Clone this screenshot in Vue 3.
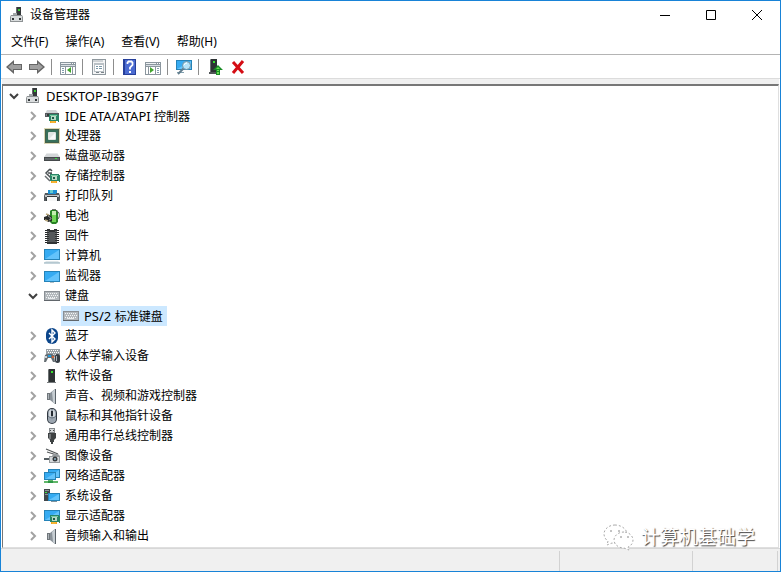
<script setup>
import { ref } from 'vue'

const monitor = (x, y, w, h) =>
  `<rect x="${x}" y="${y}" width="${w}" height="${h}" fill="#2583b8"/><rect x="${x + 1}" y="${y + 1}" width="${w - 2}" height="${h - 2}" fill="#36abf2"/><path d="M${x + 1} ${y + h - 1}L${x + w - 1} ${y + 1}V${y + h - 1}z" fill="#63c3fb"/>`
const card = (x, y) =>
  `<path d="M${x} ${y}h9v1h1v7h-1v-1h-9z" fill="#2a8567"/><path d="M${x + 1} ${y + 1}h7v1h-7z" fill="#7acba2"/><rect x="${x + 2}" y="${y + 2}" width="5" height="4" fill="#b9d9c6"/><rect x="${x + 3}" y="${y + 3}" width="2" height="2" fill="#1c5c47"/><path d="M${x + 1} ${y + 7}h6v2h-6z" fill="#f2a51d"/><path d="M${x + 3} ${y + 7}v2M${x + 5} ${y + 7}v2" stroke="#ffd76a" stroke-width=".6"/>`
const keyboard = (y) =>
  `<rect x="0" y="${y}" width="16" height="10" fill="#8a8f94"/><rect x="1" y="${y + 1}" width="14" height="8" fill="#b3b8bc"/><path d="M2 ${y + 2.5}h12M2 ${y + 6.5}h12" stroke="#f3f5f6" stroke-dasharray="1 1"/><path d="M3 ${y + 4.5}h11" stroke="#f3f5f6" stroke-dasharray="1 1"/><path d="M4 ${y + 7.5}h7" stroke="#e7eaec"/><path d="M0 ${y + 9.5}h16" stroke="#61666b"/>`
const speaker =
  '<path d="M3 5h3v7H3z" fill="#70767b"/><path d="M4 6h1v5H4z" fill="#adb4b9"/><path d="M6 5l5-4v15l-5-4z" fill="#8a9299"/><path d="M8 4l3-3v15l-2-2z" fill="#c6cdd2"/><path d="M11.5 1v15" stroke="#596168"/>'
const chassis =
  '<path d="M7 0h5v9H7z" fill="#34383a"/><path d="M7 0h1v9H7z" fill="#65696b"/><path d="M9 2h2v2H9z" fill="#39cf31"/><path d="M2 8h11l1 2v5H1v-5z" fill="#8e9294"/><path d="M2 9h11v5H2z" fill="#d9dcdd"/><path d="M4 6h4v2H4z" fill="#a3a7a9"/><path d="M3 11h2v2H3zM10 11h2v2h-2z" fill="#303436"/>'
const tower =
  '<path d="M4 2l1-1h6v13H4z" fill="#2d3234"/><path d="M4 2h1v12H4z" fill="#6c7172"/><path d="M7 3h2v2H7z" fill="#37e12e"/><path d="M3 14h9v1H3z" fill="#777b7d"/>'

const icons = {
  device: chassis,
  ide: '<path d="M3 2h9l3 4H1z" fill="#cfd3d5"/><path d="M1 5h14v4H1z" fill="#53585b"/><path d="M2 6h11v2H2z" fill="#7e8487"/><path d="M3 6h2v2H3z" fill="#36393b"/>' + card(5, 6),
  cpu: '<rect x="1" y="1" width="14" height="14" fill="#45604b"/><rect x=".5" y=".5" width="15" height="15" fill="none" stroke="#b5af67" stroke-dasharray="1 1"/><rect x="2" y="2" width="12" height="12" fill="#37705a"/><rect x="4" y="4" width="8" height="8" rx="1" fill="#dfe4e1"/><path d="M5 11L11 5v6z" fill="#f8f9f8"/>',
  disk: '<path d="M3 5h10l3 4H0z" fill="#d3d6d8"/><path d="M3 5h10v1H3z" fill="#e7e9ea"/><path d="M0 9h16v4H0z" fill="#45494b"/><path d="M1 10h14v2H1z" fill="#61676a"/><path d="M11 10h2v1h-2z" fill="#37df3c"/>',
  storage: '<path d="M6 1L2 5l4 4 2-2-2-2M6 1l2 2M4 5h4" fill="none" stroke="#4b5154" stroke-width="1.5"/><path d="M1 8l5 5" fill="none" stroke="#686d70" stroke-width="1.5"/>' + card(6, 6),
  printer: '<path d="M4 2h9v5H4z" fill="#1d8fd1"/><path d="M6 2h3v3H6z" fill="#68cdd0"/><path d="M1 5h3v1h8V5h3l1 3v5H0V8z" fill="#53595d"/><path d="M1 7h14v2H1z" fill="#c0c5c8"/><path d="M3 8h10l1 5H2z" fill="#33383b"/><path d="M3 9h10v4H3z" fill="#f5f6f6"/>',
  battery: '<path d="M8 1h4v2H8z" fill="#777"/><path d="M6 3l1-1h6l1 2v10l-2 2H8l-2-2z" fill="#288325"/><path d="M8 3h4v11H8z" fill="#72d557"/><path d="M8 3h4v4H8z" fill="#c5edb0"/><path d="M12 3c4 0 4 6 2 8" fill="none" stroke="#555"/><path d="M0 9l3-1V6h1l4 3v4l-4 1-2-2H0z" fill="#292b2b"/><path d="M2 6l3 1M1 12l3 1" stroke="#b9a87d" stroke-width="1.4"/><path d="M4 8l3 2v1l-2 1" stroke="#909595" fill="none"/>',
  firmware: '<path d="M3 1h3v1h4V1h3v15H3z" fill="#303334"/><path d="M5 4h6v10H5z" fill="#54585a"/><path d="M2 2v13M14 2v13" stroke="#252829" stroke-width="2" stroke-dasharray="1 1"/><path d="M4 3v12M12 3v12" stroke="#b9bdbe" stroke-width=".7" stroke-dasharray="1 1"/>',
  computer: monitor(0, 1, 16, 11) + '<path d="M2 13h12l2 2H0z" fill="#dfe6e9"/><path d="M0 15h16" stroke="#8baab7"/>',
  monitor: monitor(0, 3, 16, 11) + '<path d="M6 14h4v1H6z" fill="#b3bec4"/>',
  keyboard: keyboard(3),
  bluetooth: '<rect x="2" y="0" width="12" height="16" rx="6" fill="#0c468b"/><path d="M5 5l6 6-3 3V2l3 3-6 6" fill="none" stroke="#fff" stroke-width="1.4"/>',
  hid: '<path d="M2 1h14v8H2z" fill="#9aa1a6"/><path d="M3 2.5h12M3 6.5h12" stroke="#fff" stroke-dasharray="1 1"/><path d="M4 4.5h11" stroke="#fff" stroke-dasharray="1 1"/><path d="M0 14l1-7 2-1h5l2 1 1 7H9l-2-4H4l-2 4z" fill="#666e73"/><path d="M1 8h2v2H1z" fill="#cbd3d8"/><path d="M4 7h3v2H4z" fill="#249ce0"/><path d="M8 8h2v2H8z" fill="#ca643d"/><rect x="11" y="6" width="5" height="9" rx="2.5" fill="#343c44"/><path d="M12 8h1v5h-1z" fill="#aab3bb"/>',
  software: tower,
  sound: speaker,
  mouse: '<rect x="3" y="0" width="10" height="16" rx="5" fill="#303841"/><rect x="4" y="1" width="8" height="14" rx="4" fill="#9ca6b0"/><path d="M5 3l2-2v9l-2-1zM9 1l2 3v5H9z" fill="#d1d7dc"/><path d="M8 3v5" stroke="#242a31" stroke-width="2"/><path d="M4 8q4 4 8 0" fill="none" stroke="#68737e"/>',
  usb: '<path d="M5 0h6v5H5z" fill="#858a8d"/><path d="M6 1h4v3H6z" fill="#d4d7d9"/><path d="M6 2h1v1H6zM9 2h1v1H9z" fill="#43484a"/><path d="M4 5h8v5l-2 2v2H9v2H7v-2H6v-2l-2-2z" fill="#3e4243"/><path d="M5 6h2v5H5z" fill="#727678"/>',
  imaging: '<path d="M2 1l12 5M3 4l10 3" stroke="#55595b" stroke-width="1.2"/><path d="M5 8h3l1-2h5l2 2v7H5z" fill="#969b9e"/><path d="M6 9h9v5H6z" fill="#d6d9db"/><circle cx="11" cy="11" r="2.5" fill="#34393c"/><circle cx="11" cy="11" r="1" fill="#91b3c4"/><path d="M0 10h5v2H0z" fill="#565d61"/>',
  network: monitor(4, 1, 12, 9) + monitor(0, 4, 12, 8) + '<path d="M5 12h3v1H5z" fill="#777"/><path d="M0 13h4v-1h5v1h5v2H0z" fill="#61b76a"/><path d="M4 13h5v2H4z" fill="#2c9745"/>',
  system: '<path d="M0 1h6v12H0z" fill="#41474b"/><path d="M1 2h4v1H1zM1 6h3v1H1z" fill="#8b9397"/><path d="M1 4h2v1H1z" fill="#40df42"/>' + monitor(4, 5, 12, 8) + '<path d="M7 13h6v1H7z" fill="#81939d"/>',
  display: monitor(0, 2, 16, 11) + card(6, 7),
  back: '<path d="M0 8l8-7v4h8v6H8v4z" fill="#666"/><path d="M2 8l5-4v2h8v4H7v2z" fill="#a0a0a0"/>',
  forward: '<path d="M16 8L8 1v4H0v6h8v4z" fill="#666"/><path d="M14 8L9 4v2H1v4h8v2z" fill="#a0a0a0"/>',
  tree: '<path d="M0 3h16v13H0z" fill="#8b969e"/><path d="M1 4h10v1H1z" fill="#eef1f3"/><path d="M12 4h1v1h-1zM14 4h1v1h-1z" fill="#fff"/><path d="M1 6h14v1H1z" fill="#d5dce1"/><path d="M1 8h4v7H1zM6 8h6v7H6zM13 8h2v7h-2z" fill="#fff"/><path d="M2 9.5h2M2 11.5h2M2 13.5h2" stroke="#829dad"/><path d="M11 8v6l-4-3z" fill="#41a52d"/>',
  properties: '<path d="M1 0h14v16H1z" fill="#8e979d"/><path d="M2 1h12v14H2z" fill="#f4f5f6"/><path d="M2 2h10" stroke="#a9b1b6"/><path d="M3 4h10v9H3z" fill="#bac1c6"/><path d="M4 6h8v6H4z" fill="#fff"/><path d="M5 7.5h2M8 7.5h3M5 9.5h2M8 9.5h3" stroke="#7b98a8"/><path d="M5 13.5h3M10 13.5h3" stroke="#7a8389"/>',
  help: '<path d="M1 0h13v16H1z" fill="#263f9a"/><path d="M3 1h10v14H3z" fill="#4b6bd1"/><path d="M5.500 5V3.500l1-1h3l1 1V6L8 8.500v2" fill="none" stroke="#fff" stroke-width="1.8"/><path d="M7 12h2v2H7z" fill="#fff"/>',
  action: '<path d="M0 3h16v13H0z" fill="#8b969e"/><path d="M1 4h10v1H1z" fill="#eef1f3"/><path d="M12 4h1v1h-1zM14 4h1v1h-1z" fill="#fff"/><path d="M1 6h14v1H1z" fill="#d5dce1"/><path d="M1 8h2v7H1zM4 8h6v7H4zM11 8h4v7h-4z" fill="#fff"/><path d="M12 9.5h2M12 11.5h2M12 13.5h2" stroke="#829dad"/><path d="M5 8v6l4-3z" fill="#41a52d"/>',
  scan: monitor(0, 1, 16, 10) + '<path d="M1 13h7v1H1z" fill="#83a2b1"/><path d="M8 9l-6 6" stroke="#627e8d" stroke-width="2"/><circle cx="10.5" cy="6.5" r="4" fill="#b5e4fa" stroke="#6f91a2"/><path d="M8 6q1-2 3-2" stroke="#fff" fill="none"/>',
  update: '<path d="M3 1l1-1h6v13H3z" fill="#2d3234"/><path d="M3 1h1v12H3z" fill="#6c7172"/><path d="M6 2h2v2H6z" fill="#37e12e"/><path d="M2 13h7v2H2z" fill="#505557"/><path d="M11 6l5 5h-3v5H9v-5H6z" fill="#178b24"/><path d="M11 8l2 2H9zM10 11h2v1h-2zM10 13h2v2h-2z" fill="#6ad852"/>',
  remove: '<path d="M3 3l10 11M13 2L3 14" stroke="#d40d14" stroke-width="3"/>'
}

const menus = ['文件(F)', '操作(A)', '查看(V)', '帮助(H)']
const tools = [
  [['back', '后退'], ['forward', '前进']],
  [['tree', '显示/隐藏控制台树']],
  [['properties', '属性']],
  [['help', '帮助'], ['action', '显示/隐藏操作窗格']],
  [['scan', '扫描检测硬件改动']],
  [['update', '更新驱动程序'], ['remove', '卸载设备']]
]

// Latin words are set one size larger than the Chinese text beside them.
const runs = (name) =>
  name.split(/([A-Z][\x20-\x7e]*)/).filter(Boolean).map((text) => ({ text, latin: /^[A-Z]/.test(text) }))

const rootOpen = ref(true)
const selected = ref('PS/2 标准键盘')
const categories = ref([
  ['ide', 'IDE ATA/ATAPI 控制器'],
  ['cpu', '处理器'],
  ['disk', '磁盘驱动器'],
  ['storage', '存储控制器'],
  ['printer', '打印队列'],
  ['battery', '电池'],
  ['firmware', '固件'],
  ['computer', '计算机'],
  ['monitor', '监视器'],
  ['keyboard', '键盘', ['PS/2 标准键盘']],
  ['bluetooth', '蓝牙'],
  ['hid', '人体学输入设备'],
  ['software', '软件设备'],
  ['sound', '声音、视频和游戏控制器'],
  ['mouse', '鼠标和其他指针设备'],
  ['usb', '通用串行总线控制器'],
  ['imaging', '图像设备'],
  ['network', '网络适配器'],
  ['system', '系统设备'],
  ['display', '显示适配器'],
  ['sound', '音频输入和输出']
].map(([icon, name, devices = []]) => ({ icon, name, devices, open: devices.length > 0 })))
</script>

<template>
  <div class="window">
    <header class="titlebar">
      <svg class="icon" viewBox="0 0 16 16" v-html="icons.device"></svg>
      <h1>设备管理器</h1>
      <div class="captions">
        <button type="button" aria-label="最小化"><svg viewBox="0 0 10 10"><path d="M0 5.5h10" /></svg></button>
        <button type="button" aria-label="最大化"><svg viewBox="0 0 10 10"><path d="M.5.5h9v9h-9z" /></svg></button>
        <button type="button" aria-label="关闭"><svg viewBox="0 0 10 10"><path d="M0 0l10 10M10 0L0 10" /></svg></button>
      </div>
    </header>

    <nav class="menubar">
      <button v-for="menu in menus" :key="menu" type="button">{{ menu }}</button>
    </nav>

    <div class="toolbar" role="toolbar">
      <div v-for="(group, i) in tools" :key="i" class="group">
        <button v-for="[icon, label] in group" :key="icon" type="button" :aria-label="label">
          <svg class="icon" viewBox="0 0 16 16" v-html="icons[icon]"></svg>
        </button>
      </div>
    </div>

    <main class="pane">
      <div class="row">
        <button class="toggle" :class="{ open: rootOpen }" type="button" aria-label="展开或折叠" @click="rootOpen = !rootOpen">
          <svg viewBox="0 0 10 10"><path d="M3 1l4 4-4 4" /></svg>
        </button>
        <button class="item" type="button">
          <svg class="icon" viewBox="0 0 16 16" v-html="icons.device"></svg>
          <span class="latin">DESKTOP-IB39G7F</span>
        </button>
      </div>
      <ul v-if="rootOpen" class="branch">
        <li v-for="cat in categories" :key="cat.name">
          <div class="row">
            <button class="toggle" :class="{ open: cat.open }" type="button" aria-label="展开或折叠" @click="cat.open = !cat.open">
              <svg viewBox="0 0 10 10"><path d="M3 1l4 4-4 4" /></svg>
            </button>
            <button class="item" :class="{ selected: selected === cat.name }" type="button" @click="selected = cat.name">
              <svg class="icon" viewBox="0 0 16 16" v-html="icons[cat.icon]"></svg>
              <span class="name"><span v-for="run in runs(cat.name)" :key="run.text" :class="{ latin: run.latin }">{{ run.text }}</span></span>
            </button>
          </div>
          <ul v-if="cat.open && cat.devices.length" class="leaves">
            <li v-for="device in cat.devices" :key="device" class="row">
              <button class="item" :class="{ selected: selected === device }" type="button" @click="selected = device">
                <svg class="icon" viewBox="0 0 16 16" v-html="icons[cat.icon]"></svg>
                <span class="name"><span v-for="run in runs(device)" :key="run.text" :class="{ latin: run.latin }">{{ run.text }}</span></span>
              </button>
            </li>
          </ul>
        </li>
      </ul>
    </main>

    <footer class="status"><span></span><span></span><span></span></footer>

    <div class="brand">
      <svg viewBox="0 0 32 28">
        <path class="bubble" d="M12 2C6 2 1 6 1 11c0 3 2 6 4 7l-1 4 5-2c9 2 15-3 15-9 0-5-6-9-12-9z" />
        <path class="bubble" d="M21 9c-6 0-10 4-10 8s4 8 10 8l5 2-1-3c3-1 5-4 5-7 0-4-4-8-9-8z" />
        <path class="eyes" d="M7 8h2M15 8h2M17 14h2M24 14h2" />
      </svg>
      <span>计算机基础学</span>
    </div>
  </div>
</template>

<style>
body {
  margin: 0;
}
</style>

<style scoped>
.window {
  position: relative;
  box-sizing: border-box;
  display: flex;
  flex-direction: column;
  min-height: 100vh;
  border: 1px solid #1883d7;
  background: #fff;
  color: #000;
  font: 12px/20px "Noto Sans", "Noto Sans CJK SC", sans-serif;
}

button {
  display: flex;
  align-items: center;
  padding: 0;
  border: 0;
  background: none;
  color: inherit;
  font: inherit;
  white-space: nowrap;
}

svg {
  display: block;
  flex: none;
}

.icon {
  width: 16px;
  height: 16px;
}

.titlebar {
  display: flex;
  align-items: center;
  gap: 5px;
  height: 28px;
  padding-left: 8px;
}

h1 {
  margin: 0;
  font: inherit;
}

.captions {
  display: flex;
  align-self: stretch;
  margin-left: auto;
}

.captions button {
  justify-content: center;
  width: 46px;
}

.captions svg {
  width: 10px;
  height: 10px;
  fill: none;
  stroke: #000;
}

.menubar {
  display: flex;
  gap: 17px;
  height: 25px;
  padding-left: 10px;
  border-bottom: 1px solid #b4b4b4;
}

.toolbar {
  display: flex;
  align-items: center;
  height: 22px;
  padding: 1px 0 0 5px;
  border-bottom: 1px solid #dcdcdc;
}

.group {
  display: flex;
  gap: 7px;
}

.group + .group {
  margin-left: 6px;
  padding-left: 8px;
  border-left: 1px solid #8d8d8d;
}

.pane {
  flex: 1;
  margin: 5px 1px 0;
  border: 1px solid #dfdfdf;
  border-top: 2px solid #777;
  border-left-color: #777;
  box-shadow: 0 -5px #f0f0f0;
}

.row {
  display: flex;
  align-items: center;
  height: 20px;
}

.toggle {
  justify-content: center;
  width: 20px;
  height: 20px;
  padding-left: 2px;
}

.toggle svg {
  width: 10px;
  height: 10px;
  fill: none;
  stroke: #a2a2a2;
  stroke-width: 2;
}

.toggle.open svg {
  transform: rotate(90deg);
  stroke: #404040;
}

.item {
  gap: 5px;
  height: 20px;
  padding: 0 4px 0 2px;
}

.item.selected {
  background: #cce8ff;
}

.name,
.name span {
  white-space: pre;
}

.latin {
  font-size: 13px;
}

ul {
  margin: 0;
  padding: 0;
  list-style: none;
}

.branch {
  padding-left: 19px;
}

.leaves {
  padding-left: 39px;
}

.status {
  display: flex;
  height: 20px;
  padding: 2px 2px 0 0;
  border-top: 1px solid #d7d7d7;
  background: #f0f0f0;
}

.status span {
  width: 132px;
  border-right: 1px solid #d2d2d2;
}

.status span:first-child {
  flex: 1;
}

.status span:last-child {
  width: 84px;
}

.brand {
  position: absolute;
  right: 25px;
  bottom: 20px;
  display: flex;
  align-items: center;
  gap: 6px;
  color: #fff;
  font-size: 19px;
  line-height: 28px;
  text-shadow: 1px 1px 1px #444;
  pointer-events: none;
}

.brand svg {
  width: 32px;
  height: 28px;
}

.bubble {
  fill: #fff;
  stroke: #aaa;
  stroke-dasharray: 2 2;
}

.eyes {
  stroke: #888;
}
</style>
